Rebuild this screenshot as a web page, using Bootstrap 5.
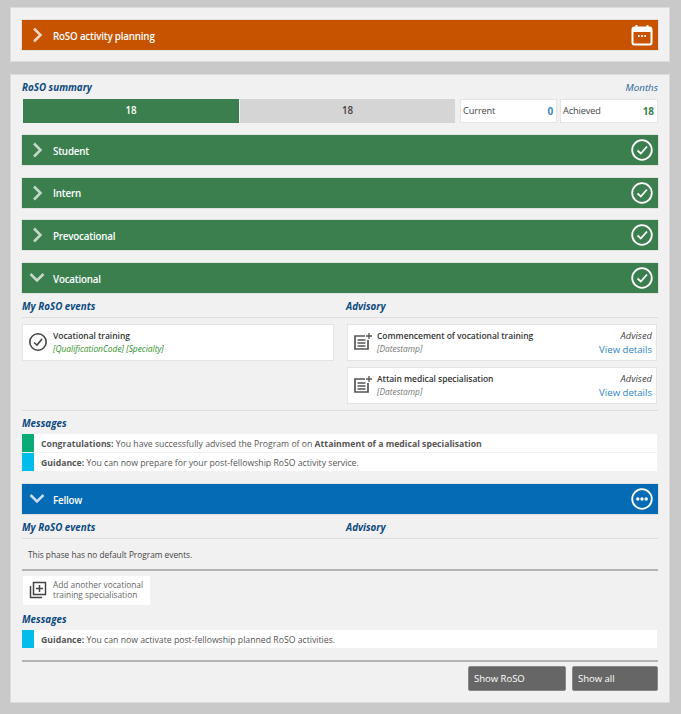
<!DOCTYPE html>
<html lang="en">
<head>
<meta charset="utf-8">
<title>RoSO</title>
<link href="https://cdn.jsdelivr.net/npm/bootstrap@5.3.0/dist/css/bootstrap.min.css" rel="stylesheet">
<style>
html,body{height:714px;overflow:hidden}
body{background:#c9c9c9;font-family:"Open Sans","Noto Sans","Liberation Sans",sans-serif;font-size:9px;color:#444;padding:7px 11px 0 10px;line-height:1.2}
.sheet{background:#f1f1f1;border:1px solid #dcdcdc;padding:12px 11px}
.sheet-top{height:55px;margin-bottom:12px}
.sheet-main{height:629px;padding-top:0}
.bar{height:30px;color:#fff;font-weight:600;font-size:9.8px;letter-spacing:-.2px;padding:0 5px 0 10px;margin-bottom:12.67px;box-shadow:0 0 0 .5px #cfd8cf}
.bar-o{background:#c75300;margin-bottom:0}
.bar-g{background:#3b7f4e}
.bar-b{background:#066bb5;margin-bottom:0}
.bar-label{margin-left:10px;padding-top:3px}
.bar-ico{width:22px;height:22px;flex:none}
.chev{width:11px;height:16px;flex:none}
.chev-d{width:16px;height:11px;margin-left:-3px;margin-right:-2px;flex:none}
.heading{color:#0c4a80;font-style:italic;font-weight:700;font-size:9.8px}
.months{color:#1f5f99;font-style:italic;font-size:9.8px}
.summary-head{height:24px;padding-top:7px}
.sum{height:24px;font-size:9.8px;margin-bottom:12px}
.sum-a{width:216px;margin-left:1px;background:#3b7f4e;color:#fff;font-weight:600}
.sum-b{width:215px;margin-left:1px;background:#d5d5d5;color:#444;font-weight:600;margin-right:5px}
.stat{background:#fff;border:1px solid #e4e4e4;padding:0 3px 0 2px;font-size:9.2px;letter-spacing:-.1px}
.stat-1{width:97px;margin-right:3px}
.stat-2{width:98px}
.num-b{color:#3a87c8;font-weight:700;font-size:10px}
.num-g{color:#3b7f4e;font-weight:700;font-size:10px}
.cols{display:grid;grid-template-columns:324px 1fr;}
.col-head{height:25px;padding-top:8.5px;border-bottom:1px solid #dfdfdf}
.ev{background:#fff;border:1px solid #e4e4e4;height:37px;padding:0 4px 0 5px;margin-top:6px}
.ev-r{margin-left:1px;margin-right:1px}
.ev-r + .ev-r{margin-top:6px}
.ev-l{width:312px}
.ev-l .ev-ico{margin-right:5px}
.ev-title{font-weight:600;color:#333;font-size:8.5px;letter-spacing:-.04px}
.ev-sub{font-style:italic;font-size:8.4px;color:#777;margin-top:2px}
.ev-sub-g{color:#2f8f2a}
.ev-ico{width:20px;height:20px;flex:none;margin-right:4px}
.adv{font-style:italic;color:#444;font-size:9.4px}
.det{color:#2e86c8;font-size:9.6px;margin-top:3px;text-decoration:none;display:block}
.rule-thin{border-bottom:1px solid #dfdfdf;padding-bottom:6px}
.rule-thick{border-bottom:2px solid #b4b4b4}
.msgs-head{height:23px;padding-top:7px}
.msg{background:#fff;height:18px;margin-right:1px;margin-bottom:1px;font-size:8.7px;color:#555}
.msg-text{padding-top:2px}
.msg b{font-weight:700}
.tag{width:12px;height:100%;flex:none;margin-right:7px}
.tag-g{background:#0bab78}
.tag-c{background:#00bdec}
.empty{height:32px;padding-left:6px;font-size:8.3px;color:#444;padding-top:2px}
.add{background:#fff;width:127px;height:29px;margin:5px 0 2px 1px;color:#666;font-size:8.3px;line-height:10.7px;padding-left:6px}
.add svg{width:18px;height:18px;flex:none;margin-right:6px}
.btn-dk{background:#666;color:#fff;border:1px solid #888;border-radius:2px;height:25px;font-size:9.5px;padding:2px 5px 0;font-weight:500;text-align:left}
.btn-w1{width:98px}
.btn-w2{width:86px}
.btn-row{gap:6px;margin-top:4px}
.bar-ico circle.ring{stroke-width:1.8}
.fellow-gap{margin-top:13px}
</style>
</head>
<body>
<div class="sheet sheet-top">
  <div class="bar bar-o d-flex align-items-center">
    <svg class="chev" viewBox="0 0 11 16"><path d="M2 1.500 8.500 8 2 14.500" fill="none" stroke="#f3d5bf" stroke-width="2.500"/></svg>
    <span class="bar-label flex-grow-1">RoSO activity planning</span>
    <svg class="bar-ico" viewBox="0 0 22 22"><rect x="1.500" y="3.500" width="19" height="17" rx="2" fill="none" stroke="#fff" stroke-width="2"/><rect x="1.500" y="3.500" width="19" height="4.500" fill="#fff"/><path d="M5.500 1v3M16.500 1v3" stroke="#fff" stroke-width="2"/><path d="M7 12h1.600M10.200 12h1.600M13.400 12h1.600" stroke="#fff" stroke-width="1.800"/></svg>
  </div>
</div>
<div class="sheet sheet-main">
  <div class="summary-head d-flex justify-content-between"><span class="heading">RoSO summary</span><span class="months">Months</span></div>
  <div class="sum d-flex">
    <div class="sum-a d-flex align-items-center justify-content-center">18</div>
    <div class="sum-b d-flex align-items-center justify-content-center">18</div>
    <div class="stat stat-1 d-flex align-items-center justify-content-between"><span>Current</span><span class="num-b">0</span></div>
    <div class="stat stat-2 d-flex align-items-center justify-content-between"><span>Achieved</span><span class="num-g">18</span></div>
  </div>
  <div class="bar bar-g d-flex align-items-center">
    <svg class="chev" viewBox="0 0 11 16"><path d="M2 1.500 8.500 8 2 14.500" fill="none" stroke="#c5d9cb" stroke-width="2.500"/></svg>
    <span class="bar-label flex-grow-1">Student</span>
    <svg class="bar-ico" viewBox="0 0 22 22"><circle class="ring" cx="11" cy="11" r="9.800" fill="none" stroke="#fff"/><path d="M6.500 11.500 9.800 14.500 16 7.500" fill="none" stroke="#fff" stroke-width="1.800"/></svg>
  </div>
  <div class="bar bar-g d-flex align-items-center">
    <svg class="chev" viewBox="0 0 11 16"><path d="M2 1.500 8.500 8 2 14.500" fill="none" stroke="#c5d9cb" stroke-width="2.500"/></svg>
    <span class="bar-label flex-grow-1">Intern</span>
    <svg class="bar-ico" viewBox="0 0 22 22"><circle class="ring" cx="11" cy="11" r="9.800" fill="none" stroke="#fff"/><path d="M6.500 11.500 9.800 14.500 16 7.500" fill="none" stroke="#fff" stroke-width="1.800"/></svg>
  </div>
  <div class="bar bar-g d-flex align-items-center">
    <svg class="chev" viewBox="0 0 11 16"><path d="M2 1.500 8.500 8 2 14.500" fill="none" stroke="#c5d9cb" stroke-width="2.500"/></svg>
    <span class="bar-label flex-grow-1">Prevocational</span>
    <svg class="bar-ico" viewBox="0 0 22 22"><circle class="ring" cx="11" cy="11" r="9.800" fill="none" stroke="#fff"/><path d="M6.500 11.500 9.800 14.500 16 7.500" fill="none" stroke="#fff" stroke-width="1.800"/></svg>
  </div>
  <div class="bar bar-g d-flex align-items-center mb-0">
    <svg class="chev-d" viewBox="0 0 16 11"><path d="M1.500 2 8 8.500 14.500 2" fill="none" stroke="#c5d9cb" stroke-width="2.500"/></svg>
    <span class="bar-label flex-grow-1">Vocational</span>
    <svg class="bar-ico" viewBox="0 0 22 22"><circle class="ring" cx="11" cy="11" r="9.800" fill="none" stroke="#fff"/><path d="M6.500 11.500 9.800 14.500 16 7.500" fill="none" stroke="#fff" stroke-width="1.800"/></svg>
  </div>
  <div class="cols rule-thin">
    <div>
      <div class="col-head heading">My RoSO events</div>
      <div class="ev ev-l d-flex align-items-center">
        <svg class="ev-ico" viewBox="0 0 20 20"><circle cx="10" cy="10" r="8.200" fill="none" stroke="#444" stroke-width="1.600"/><path d="M6 10.500 9 13 14 7" fill="none" stroke="#444" stroke-width="1.600"/></svg>
        <div class="flex-grow-1"><div class="ev-title">Vocational training</div><div class="ev-sub ev-sub-g">[QualificationCode] [Specialty]</div></div>
      </div>
    </div>
    <div>
      <div class="col-head heading">Advisory</div>
      <div class="ev ev-r d-flex align-items-center">
        <svg class="ev-ico" viewBox="0 0 20 20"><path d="M12 4H2v13h13V8" fill="none" stroke="#555" stroke-width="1.700"/><path d="M4.500 8h8M4.500 11h8M4.500 14h8" stroke="#555" stroke-width="1.300"/><path d="M16 1v6M13 4h6" stroke="#555" stroke-width="1.300"/></svg>
        <div class="flex-grow-1"><div class="ev-title">Commencement of vocational training</div><div class="ev-sub">[Datestamp]</div></div>
        <div class="text-end"><div class="adv">Advised</div><a class="det" href="#">View details</a></div>
      </div>
      <div class="ev ev-r d-flex align-items-center">
        <svg class="ev-ico" viewBox="0 0 20 20"><path d="M12 4H2v13h13V8" fill="none" stroke="#555" stroke-width="1.700"/><path d="M4.500 8h8M4.500 11h8M4.500 14h8" stroke="#555" stroke-width="1.300"/><path d="M16 1v6M13 4h6" stroke="#555" stroke-width="1.300"/></svg>
        <div class="flex-grow-1"><div class="ev-title">Attain medical specialisation</div><div class="ev-sub">[Datestamp]</div></div>
        <div class="text-end"><div class="adv">Advised</div><a class="det" href="#">View details</a></div>
      </div>
    </div>
  </div>
  <div class="msgs-head heading">Messages</div>
  <div class="msg d-flex align-items-center"><span class="tag tag-g"></span><span class="msg-text"><b>Congratulations:</b> You have successfully advised the Program of on <b>Attainment of a medical specialisation</b></span></div>
  <div class="msg d-flex align-items-center"><span class="tag tag-c"></span><span class="msg-text"><b>Guidance:</b> You can now prepare for your post-fellowship RoSO activity service.</span></div>
  <div class="bar bar-b d-flex align-items-center fellow-gap">
    <svg class="chev-d" viewBox="0 0 16 11"><path d="M1.500 2 8 8.500 14.500 2" fill="none" stroke="#c7dcee" stroke-width="2.500"/></svg>
    <span class="bar-label flex-grow-1">Fellow</span>
    <svg class="bar-ico" viewBox="0 0 22 22"><circle class="ring" cx="11" cy="11" r="9.800" fill="none" stroke="#fff"/><circle cx="6.800" cy="11" r="1.700" fill="#fff"/><circle cx="11" cy="11" r="1.700" fill="#fff"/><circle cx="15.200" cy="11" r="1.700" fill="#fff"/></svg>
  </div>
  <div class="cols">
    <div class="col-head heading">My RoSO events</div>
    <div class="col-head heading">Advisory</div>
  </div>
  <div class="empty rule-thick d-flex align-items-center">This phase has no default Program events.</div>
  <div class="add d-flex align-items-center">
    <svg viewBox="0 0 18 18"><path d="M1.500 5v11.500H13" fill="none" stroke="#444" stroke-width="1.500"/><rect x="4.500" y="1.500" width="12" height="12" fill="none" stroke="#444" stroke-width="1.500"/><path d="M10.500 4v7M7 7.500h7" stroke="#444" stroke-width="1.500"/></svg>
    <span>Add another vocational<br>training specialisation</span>
  </div>
  <div class="msgs-head heading">Messages</div>
  <div class="msg d-flex align-items-center"><span class="tag tag-c"></span><span class="msg-text"><b>Guidance:</b> You can now activate post-fellowship planned RoSO activities.</span></div>
  <div class="rule-thick pt-2 mt-1"></div>
  <div class="d-flex justify-content-end btn-row">
    <button type="button" class="btn btn-dk btn-w1">Show RoSO</button>
    <button type="button" class="btn btn-dk btn-w2">Show all</button>
  </div>
</div>
</body>
</html>
